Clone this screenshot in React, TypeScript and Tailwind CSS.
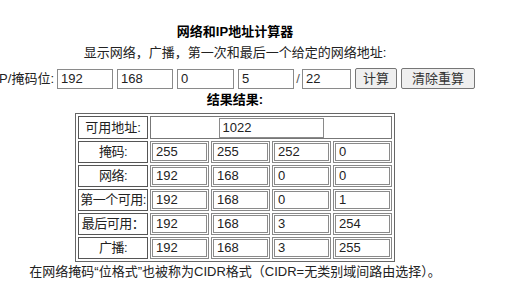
import React from 'react';

const font = "font-['Liberation_Sans','Noto_Sans_CJK_SC',sans-serif]";

const rows: { label: string; values: string[] }[] = [
    { label: '掩码:', values: ['255', '255', '252', '0'] },
    { label: '网络:', values: ['192', '168', '0', '0'] },
    { label: '第一个可用:', values: ['192', '168', '0', '1'] },
    { label: '最后可用：', values: ['192', '168', '3', '254'] },
    { label: '广播:', values: ['192', '168', '3', '255'] },
];

const Field: React.FC<{ value: string; className?: string }> = ({ value, className }) => (
    <input
        readOnly
        value={value}
        className={`border border-[#8a8a8a] bg-white px-[3px] text-[13px] text-[#222] outline-none ${font} ${className ?? ''}`}
    />
);

const Calculator: React.FC = () => {
    return (
        <div className={`w-[470px] pt-[24px] flex flex-col items-center text-[13px] text-[#222] ${font}`}>
            {/* Header */}
            <h1 className="font-bold text-[13px] leading-[16px] text-black">网络和IP地址计算器</h1>
            <p className="mt-[5px] leading-[16px]">显示网络，广播，第一次和最后一个给定的网络地址:</p>

            {/* Input row */}
            <div className="mt-[7px] flex items-center justify-center w-full">
                <span className="shrink-0 whitespace-nowrap w-[59px] text-right">IP/掩码位:</span>
                <Field value="192" className="ml-[3px] w-[56px] h-[20px] shrink-0" />
                <Field value="168" className="ml-[4px] w-[56px] h-[20px] shrink-0" />
                <Field value="0" className="ml-[4px] w-[57px] h-[20px] shrink-0" />
                <Field value="5" className="ml-[4px] w-[56px] h-[20px] shrink-0" />
                <span className="shrink-0 w-[8px] text-center text-[#555]">/</span>
                <Field value="22" className="w-[49px] h-[20px] shrink-0" />
                <button className="ml-[4px] shrink-0 w-[42px] h-[21px] bg-[#efefef] border border-[#767676] rounded-[2px] text-[13px] text-[#333]">
                    计算
                </button>
                <button className="ml-[4px] shrink-0 w-[74px] h-[21px] bg-[#efefef] border border-[#767676] rounded-[2px] text-[13px] text-[#333]">
                    清除重算
                </button>
            </div>

            {/* Results */}
            <h2 className="mt-[3px] font-bold leading-[16px] text-black">结果结果:</h2>
            <table className="mt-[5px] border-separate border-spacing-[2px] border border-[#666]">
                <tbody>
                    <tr>
                        <td className="w-[70px] h-[23px] border border-[#555] text-center whitespace-nowrap p-0">可用地址:</td>
                        <td colSpan={4} className="h-[23px] border border-[#777] p-0 text-center">
                            <Field value="1022" className="w-[105px] h-[20px] align-middle" />
                        </td>
                    </tr>
                    {rows.map((row) => (
                        <tr key={row.label}>
                            <td className="w-[70px] h-[22px] border border-[#555] text-center whitespace-nowrap p-0 tracking-[-0.5px]">
                                {row.label}
                            </td>
                            {row.values.map((v, i) => (
                                <td key={i} className="w-[59px] h-[22px] border border-[#888] p-px">
                                    <Field value={v} className="w-full h-[18px] block" />
                                </td>
                            ))}
                        </tr>
                    ))}
                </tbody>
            </table>

            <p className="mt-[2px] leading-[16px] whitespace-nowrap">
                在网络掩码“位格式”也被称为CIDR格式（CIDR=无类别域间路由选择）。
            </p>
        </div>
    );
};

export default function App() {
    return (
        <div className="bg-white w-[530px] h-[287px] overflow-hidden">
            <Calculator />
        </div>
    );
}
